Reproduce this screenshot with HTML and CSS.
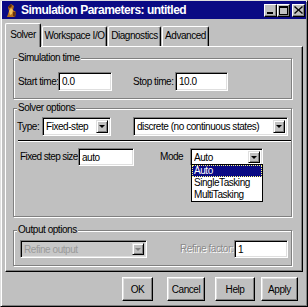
FILE: index.html
```html
<!DOCTYPE html>
<html>
<head>
<meta charset="utf-8">
<link rel="stylesheet" href="styles.css">
</head>
<body>
<div class="window">
  <div class="titlebar">
    <svg class="app-icon" width="14" height="15" viewBox="0 0 14 15">
      <path d="M3 14 L5 8 L4 4 L7 1 L10 3 L9 7 L12 9 L11 14 Z" fill="#b8701c"/>
      <path d="M5 8 L7 5 L9 7 L8 11 L6 12 Z" fill="#f0c060"/>
      <path d="M4 4 L7 1 L8 3 L6 5 Z" fill="#5a2a08"/>
      <path d="M9 9 L12 9 L11 14 L9 13 Z" fill="#6a3410"/>
    </svg>
    <span class="title">Simulation Parameters: untitled</span>
    <div class="controls">
      <span class="ctl"><svg width="9" height="8" viewBox="0 0 9 8"><rect x="1" y="6" width="6" height="2" fill="#000"/></svg></span>
      <span class="ctl"><svg width="9" height="9" viewBox="0 0 9 9"><rect x="0.5" y="0.5" width="8" height="8" fill="none" stroke="#000"/><rect x="0" y="0" width="9" height="2" fill="#000"/></svg></span>
      <span class="ctl ctl-close"><svg width="9" height="8" viewBox="0 0 9 8"><path d="M1 0 L4.5 3.2 L8 0 L9 1 L5.5 4 L9 7 L8 8 L4.5 4.8 L1 8 L0 7 L3.5 4 L0 1 Z" fill="#000"/></svg></span>
    </div>
  </div>
  <div class="body">
    <div class="tabs">
      <div class="tab tab-active tab-solver">Solver</div>
      <div class="tab tab-workspace">Workspace I/O</div>
      <div class="tab tab-diag">Diagnostics</div>
      <div class="tab tab-adv">Advanced</div>
    </div>
    <div class="panel">
      <fieldset class="group group-time">
        <legend>Simulation time</legend>
        <div class="row row-time">
          <span class="lbl lbl-start">Start time:</span>
          <div class="field field-start">0.0</div>
          <span class="lbl lbl-stop">Stop time:</span>
          <div class="field field-stop">10.0</div>
        </div>
      </fieldset>
      <fieldset class="group group-solver">
        <legend>Solver options</legend>
        <div class="row row-type">
          <span class="lbl lbl-type">Type:</span>
          <div class="select select-type"><span class="sel-text">Fixed-step</span><span class="arrow"></span></div>
          <div class="select select-solver"><span class="sel-text">discrete (no continuous states)</span><span class="arrow"></span></div>
        </div>
        <div class="separator"></div>
        <div class="row row-step">
          <span class="lbl lbl-fixed">Fixed step size</span>
          <div class="field field-step">auto</div>
          <span class="lbl lbl-mode">Mode</span>
          <div class="select select-mode"><span class="sel-text">Auto</span><span class="arrow"></span>
            <ul class="dropdown">
              <li class="opt opt-sel">Auto</li>
              <li class="opt">SingleTasking</li>
              <li class="opt">MultiTasking</li>
            </ul>
          </div>
        </div>
      </fieldset>
      <fieldset class="group group-output">
        <legend>Output options</legend>
        <div class="row row-output">
          <div class="select select-refine disabled"><span class="sel-text">Refine output</span><span class="arrow"></span></div>
          <span class="lbl lbl-factor disabled-text">Refine factor:</span>
          <div class="field field-factor">1</div>
        </div>
      </fieldset>
    </div>
    <div class="buttons">
      <div class="btn btn-ok">OK</div>
      <div class="btn btn-cancel">Cancel</div>
      <div class="btn btn-help">Help</div>
      <div class="btn btn-apply">Apply</div>
    </div>
  </div>
</div>
</body>
</html>
```
FILE: styles.css
```css
* { box-sizing: border-box; }
html, body { margin: 0; padding: 0; }
body {
  width: 308px;
  height: 307px;
  overflow: hidden;
  background: #c0c0c0;
  font-family: "Liberation Sans", Arial, sans-serif;
  font-size: 10px;
  letter-spacing: -0.45px;
  color: #000;
}
.window {
  width: 308px;
  height: 307px;
  border: 1px solid;
  border-color: #dfdfdf #000 #000 #dfdfdf;
  box-shadow: inset 1px 1px 0 #fff, inset -1px -1px 0 #808080;
  padding: 0 1px;
  background: #c0c0c0;
}
.titlebar {
  height: 18px;
  background: #0a0a84;
  display: flex;
  align-items: center;
  padding: 0 1px 0 1px;
}
.app-icon { display: block; margin: 0 3px 0 1px; }
.title {
  color: #fff;
  font-weight: bold;
  font-size: 12px;
  letter-spacing: -0.5px;
  line-height: 18px;
  white-space: nowrap;
  flex: 1;
}
.controls { display: flex; align-items: center; }
.ctl {
  width: 13px;
  height: 13px;
  background: #c0c0c0;
  border: 1px solid;
  border-color: #fff #000 #000 #fff;
  box-shadow: inset -1px -1px 0 #808080;
  display: flex;
  align-items: center;
  justify-content: center;
}
.ctl svg { display: block; }
.ctl-close { margin-left: 2px; }

.body { padding: 4px 3px 0 3px; }

.tabs {
  display: flex;
  align-items: flex-end;
  height: 23px;
  position: relative;
  z-index: 1;
}
.tab {
  height: 20px;
  background: #c0c0c0;
  border-top: 1px solid #fff;
  border-left: 1px solid #fff;
  border-right: 1px solid #000;
  box-shadow: inset -1px 0 0 #808080;
  border-radius: 2px 2px 0 0;
  text-align: center;
  line-height: 18px;
  white-space: nowrap;
  margin-left: 1px;
}
.tab-active {
  height: 24px;
  margin-bottom: -1px;
  margin-left: 0;
  line-height: 21px;
}
.tab-solver { width: 36px; }
.tab-workspace { width: 65px; }
.tab-diag { width: 53px; }
.tab-adv { width: 47px; }

.panel {
  height: 226px;
  border: 1px solid;
  border-color: #fff #000 #000 #fff;
  box-shadow: inset -1px -1px 0 #808080;
  padding: 5px 10px 0 7px;
}

.group {
  margin: 0;
  padding: 0;
  border: 1px solid #808080;
  box-shadow: inset 1px 1px 0 #fff, 1px 1px 0 #fff;
  min-width: 0;
}
.group legend {
  margin-left: 3px;
  padding: 0 1px;
  line-height: 12px;
  background: #c0c0c0;
}
.group-time { padding: 8px 0 7px 0; }
.group-solver { margin-top: 3px; padding: 3px 0 50px 0; }
.group-output { margin-top: 7px; padding: 4px 0 7px 0; }

.row { display: flex; align-items: center; }
.row-time { padding-left: 4px; height: 19px; }
.row-type { padding-left: 3px; height: 19px; }
.row-step { padding-left: 6px; height: 18px; margin-top: 6px; }
.row-output { padding-left: 6px; height: 18px; }

.lbl { white-space: nowrap; line-height: 12px; }
.lbl-start { width: 40px; }
.lbl-stop { width: 42px; margin-left: 21px; }
.lbl-type { width: 25px; }
.lbl-fixed { width: 58px; letter-spacing: -0.6px; }
.lbl-mode { width: 30px; margin-left: 26px; }
.lbl-factor { width: 54px; margin-left: 33px; }
.disabled-text { color: #8a8a8a; text-shadow: 1px 1px 0 #fff; }

.field, .select {
  height: 100%;
  border: 1px solid;
  border-color: #808080 #fff #fff #808080;
  box-shadow: inset 1px 1px 0 #000, inset -1px -1px 0 #dfdfdf;
  background: #fff;
  padding: 0 3px;
  display: flex;
  align-items: center;
  white-space: nowrap;
}
.field-start { width: 54px; }
.field-stop { width: 53px; }
.field-step { width: 56px; }
.field-factor { width: 54px; }

.select { position: relative; padding-right: 2px; }
.sel-text { flex: 1; overflow: hidden; }
.arrow {
  width: 12px;
  align-self: stretch;
  margin: 2px 0;
  background: #c0c0c0;
  border: 1px solid;
  border-color: #dfdfdf #000 #000 #dfdfdf;
  box-shadow: inset 1px 1px 0 #fff, inset -1px -1px 0 #808080;
  display: flex;
  align-items: center;
  justify-content: center;
}
.arrow::after {
  content: "";
  border-left: 3px solid transparent;
  border-right: 3px solid transparent;
  border-top: 3px solid #000;
}
.select-type { width: 69px; }
.select-solver { width: 155px; margin-left: 22px; }
.select-mode { width: 73px; }
.select-refine { width: 127px; }
.select.disabled { background: #c8c8c8; }
.select.disabled .sel-text { color: #9a9a9a; }
.select.disabled .arrow::after { border-top-color: #808080; }

.separator {
  margin: 4px 0 0 4px;
  height: 2px;
  border-top: 1px solid #000;
  border-bottom: 1px solid #fff;
  width: 273px;
}

.dropdown {
  position: absolute;
  top: 100%;
  left: 0;
  width: 72px;
  margin: -1px 0 0 0;
  padding: 0;
  list-style: none;
  background: #fff;
  border: 1px solid #000;
  z-index: 2;
}
.opt { height: 12px; line-height: 12px; padding-left: 2px; }
.opt-sel {
  background: #0a0a84;
  color: #fff;
  outline: 1px dotted #ffff80;
  outline-offset: -1px;
}

.buttons {
  display: flex;
  justify-content: flex-end;
  margin-top: 5px;
  padding-right: 5px;
}
.btn {
  height: 24px;
  border: 1px solid;
  border-color: #fff #000 #000 #fff;
  box-shadow: inset -1px -1px 0 #808080, inset 1px 1px 0 #dfdfdf;
  display: flex;
  align-items: center;
  justify-content: center;
}
.btn-ok { width: 31px; margin-right: 14px; }
.btn-cancel { width: 38px; margin-right: 10px; }
.btn-help { width: 40px; margin-right: 6px; }
.btn-apply { width: 37px; }
```
